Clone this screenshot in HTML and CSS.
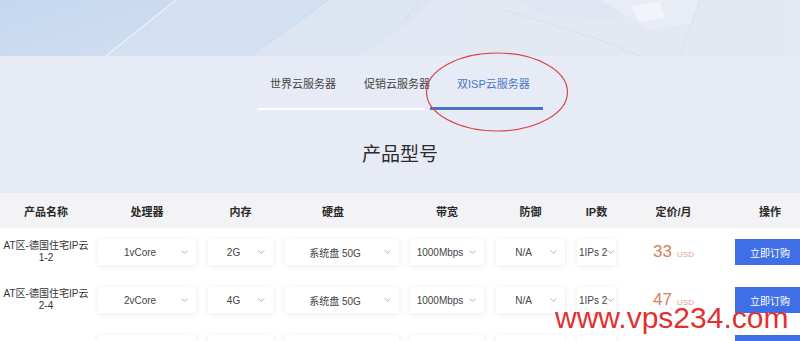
FILE: index.html
```html
<!DOCTYPE html>
<html lang="zh-CN">
<head>
<meta charset="utf-8">
<title>产品型号</title>
<link rel="stylesheet" href="styles.css">
</head>
<body>
<div class="page">
  <div class="banner">
    <svg class="banner-art" width="800" height="56" viewBox="0 0 800 56" preserveAspectRatio="none">
      <defs>
        <linearGradient id="bg" x1="0" y1="0" x2="1" y2="0">
          <stop offset="0" stop-color="#d0ddf0"/>
          <stop offset="0.45" stop-color="#e2e8f3"/>
          <stop offset="1" stop-color="#e3e8f2"/>
        </linearGradient>
        <linearGradient id="blue" x1="0" y1="0" x2="1" y2="1">
          <stop offset="0" stop-color="#c4d7ef"/>
          <stop offset="1" stop-color="#d1dff1"/>
        </linearGradient>
      </defs>
      <rect width="800" height="56" fill="url(#bg)"/>
      <polygon points="0,0 176,0 106,56 0,56" fill="url(#blue)"/>
      <polygon points="176,0 328,0 252,56 106,56" fill="#d2e0f2"/>
      <line x1="176" y1="0" x2="106" y2="56" stroke="#e8eff8" stroke-width="1.5"/>
      <line x1="328" y1="0" x2="252" y2="56" stroke="#c9d9ee" stroke-width="1"/>
      <polygon points="330,0 430,0 410,22 360,56 252,56" fill="#dde5f2"/>
      <polyline points="420,0 405,20" stroke="#d3dbea" stroke-width="1" fill="none"/>
      <polygon points="520,0 640,0 610,20 540,14" fill="#dfe6f1"/>
      <polyline points="505,10 600,40 640,56" stroke="#d8dfec" stroke-width="1" fill="none"/>
      <polygon points="600,0 700,0 690,24 650,30" fill="#e7ecf5"/>
      <polygon points="630,6 660,2 665,18 640,22" fill="#f1f4fa"/>
      <polyline points="700,0 680,56" stroke="#dbe1ee" stroke-width="1" fill="none"/>
      <polyline points="745,0 720,10 700,40" stroke="#dfe5f0" stroke-width="1" fill="none"/>
    </svg>
  </div>

  <section class="intro">
    <nav class="tabs">
      <div class="tab tab-one">世界云服务器</div>
      <div class="tab tab-two">促销云服务器</div>
      <div class="tab tab-active">双ISP云服务器</div>
    </nav>
    <h2 class="title">产品型号</h2>
  </section>

  <section class="table">
    <div class="row head">
      <div class="cell c-name">产品名称</div>
      <div class="cell c-cpu">处理器</div>
      <div class="cell c-mem">内存</div>
      <div class="cell c-disk">硬盘</div>
      <div class="cell c-bw">带宽</div>
      <div class="cell c-def">防御</div>
      <div class="cell c-ip">IP数</div>
      <div class="cell c-price">定价/月</div>
      <div class="cell c-act">操作</div>
    </div>

    <div class="row">
      <div class="cell c-name name">AT区-德国住宅IP云<br>1-2</div>
      <div class="cell c-cpu"><div class="select"><span>1vCore</span><svg class="chev" width="7" height="4" viewBox="0 0 7 4"><polyline points="0.5,0.5 3.5,3.3 6.5,0.5"/></svg></div></div>
      <div class="cell c-mem"><div class="select"><span>2G</span><svg class="chev" width="7" height="4" viewBox="0 0 7 4"><polyline points="0.5,0.5 3.5,3.3 6.5,0.5"/></svg></div></div>
      <div class="cell c-disk"><div class="select"><span>系统盘 50G</span><svg class="chev" width="7" height="4" viewBox="0 0 7 4"><polyline points="0.5,0.5 3.5,3.3 6.5,0.5"/></svg></div></div>
      <div class="cell c-bw"><div class="select"><span>1000Mbps</span><svg class="chev" width="7" height="4" viewBox="0 0 7 4"><polyline points="0.5,0.5 3.5,3.3 6.5,0.5"/></svg></div></div>
      <div class="cell c-def"><div class="select"><span>N/A</span><svg class="chev" width="7" height="4" viewBox="0 0 7 4"><polyline points="0.5,0.5 3.5,3.3 6.5,0.5"/></svg></div></div>
      <div class="cell c-ip"><div class="select narrow"><span>1IPs 2</span><svg class="chev" width="7" height="4" viewBox="0 0 7 4"><polyline points="0.5,0.5 3.5,3.3 6.5,0.5"/></svg></div></div>
      <div class="cell c-price"><span class="amount">33</span><span class="cur">USD</span></div>
      <div class="cell c-act"><button class="buy">立即订购</button></div>
    </div>

    <div class="row">
      <div class="cell c-name name">AT区-德国住宅IP云<br>2-4</div>
      <div class="cell c-cpu"><div class="select"><span>2vCore</span><svg class="chev" width="7" height="4" viewBox="0 0 7 4"><polyline points="0.5,0.5 3.5,3.3 6.5,0.5"/></svg></div></div>
      <div class="cell c-mem"><div class="select"><span>4G</span><svg class="chev" width="7" height="4" viewBox="0 0 7 4"><polyline points="0.5,0.5 3.5,3.3 6.5,0.5"/></svg></div></div>
      <div class="cell c-disk"><div class="select"><span>系统盘 50G</span><svg class="chev" width="7" height="4" viewBox="0 0 7 4"><polyline points="0.5,0.5 3.5,3.3 6.5,0.5"/></svg></div></div>
      <div class="cell c-bw"><div class="select"><span>1000Mbps</span><svg class="chev" width="7" height="4" viewBox="0 0 7 4"><polyline points="0.5,0.5 3.5,3.3 6.5,0.5"/></svg></div></div>
      <div class="cell c-def"><div class="select"><span>N/A</span><svg class="chev" width="7" height="4" viewBox="0 0 7 4"><polyline points="0.5,0.5 3.5,3.3 6.5,0.5"/></svg></div></div>
      <div class="cell c-ip"><div class="select narrow"><span>1IPs 2</span><svg class="chev" width="7" height="4" viewBox="0 0 7 4"><polyline points="0.5,0.5 3.5,3.3 6.5,0.5"/></svg></div></div>
      <div class="cell c-price"><span class="amount">47</span><span class="cur">USD</span></div>
      <div class="cell c-act"><button class="buy">立即订购</button></div>
    </div>

    <div class="row">
      <div class="cell c-name name"></div>
      <div class="cell c-cpu"><div class="select"></div></div>
      <div class="cell c-mem"><div class="select"></div></div>
      <div class="cell c-disk"><div class="select"></div></div>
      <div class="cell c-bw"><div class="select"></div></div>
      <div class="cell c-def"><div class="select"></div></div>
      <div class="cell c-ip"><div class="select narrow"></div></div>
      <div class="cell c-price"></div>
      <div class="cell c-act"><div class="buy"></div></div>
    </div>
  </section>

  <svg class="circle" width="150" height="86" viewBox="0 0 150 86">
    <ellipse cx="75" cy="43" rx="70.5" ry="39" fill="none" stroke="#d9474a" stroke-width="1.2"/>
  </svg>
  <div class="watermark">www.vps234.com</div>
</div>
</body>
</html>
```

FILE: styles.css
```css
* { box-sizing: border-box; }

html, body {
  margin: 0;
  padding: 0;
}

body {
  width: 800px;
  height: 341px;
  overflow: hidden;
  background: #e7ebf5;
  font-family: "Liberation Sans", "Noto Sans CJK SC", sans-serif;
  color: #333;
}

.page {
  position: relative;
  width: 800px;
  height: 341px;
  overflow: hidden;
}

.banner {
  height: 56px;
}

.banner-art {
  display: block;
}

.intro {
  height: 137px;
  background: #e7ebf5;
  display: flex;
  flex-direction: column;
  align-items: center;
}

.tabs {
  display: flex;
  margin-top: 21px;
}

.tab {
  font-size: 11px;
  line-height: 14px;
  color: #444;
  white-space: nowrap;
  padding-bottom: 16px;
}

.tab-one {
  width: 96px;
  padding-left: 13px;
  border-bottom: 2px solid #ffffff;
}

.tab-two {
  width: 72px;
  padding-left: 11px;
  border-bottom: 2px solid #ffffff;
}

.tab-active {
  width: 113px;
  margin-left: 5px;
  padding-left: 27px;
  color: #4a78c9;
  border-bottom: 3px solid #4a72c2;
}

.title {
  margin: 34px 0 0;
  font-size: 19px;
  line-height: 22px;
  font-weight: normal;
  color: #2b2b2b;
}

.table {
  background: #ffffff;
  width: 815px;
}

.row {
  display: flex;
  align-items: center;
  height: 48px;
}

.row.head {
  height: 35px;
  background: #f3f2f4;
  font-size: 11px;
  font-weight: bold;
  color: #2a2a2a;
}

.cell {
  flex: none;
  display: flex;
  align-items: center;
  justify-content: center;
  padding: 0 6px;
  white-space: nowrap;
}

.c-name { width: 92px; padding: 0; }
.c-cpu { width: 110px; }
.c-mem { width: 77px; }
.c-disk { width: 126px; }
.c-bw { width: 85px; padding-left: 5px; }
.c-def { width: 81px; }
.c-ip { width: 51px; }
.c-price { width: 103px; align-items: baseline; }
.c-act { width: 90px; padding-left: 10px; justify-content: flex-start; }

.head .c-disk { padding-right: 24px; }
.head .c-act { padding-right: 10px; justify-content: center; }

.name {
  font-size: 10px;
  line-height: 12px;
  text-align: center;
  color: #333;
  white-space: normal;
  display: block;
}

.select {
  position: relative;
  width: 100%;
  height: 26px;
  background: #ffffff;
  box-shadow: 0 1px 6px rgba(40, 60, 100, 0.10);
  display: flex;
  align-items: center;
  justify-content: center;
  padding-right: 14px;
  font-size: 10px;
  color: #444;
}

.select.narrow {
  padding-right: 10px;
  justify-content: flex-start;
  padding-left: 2px;
  overflow: hidden;
}

.chev {
  position: absolute;
  right: 8px;
  top: 11px;
}

.narrow .chev {
  right: 2px;
}

.chev polyline {
  fill: none;
  stroke: #a8acb4;
  stroke-width: 0.9;
}

.amount {
  font-size: 17px;
  color: #d47f5c;
}

.cur {
  font-size: 8px;
  color: #e0a48a;
  margin-left: 5px;
}

.buy {
  width: 70px;
  height: 26px;
  border: none;
  background: #3e6fe7;
  color: #ffffff;
  font-family: "Liberation Sans", "Noto Sans CJK SC", sans-serif;
  font-size: 10px;
  padding: 0;
}

.circle {
  position: absolute;
  left: 422px;
  top: 49px;
}

.watermark {
  position: absolute;
  left: 555px;
  top: 303px;
  font-family: "Liberation Sans", sans-serif;
  font-size: 30px;
  line-height: 30px;
  color: #e3312f;
}
```
